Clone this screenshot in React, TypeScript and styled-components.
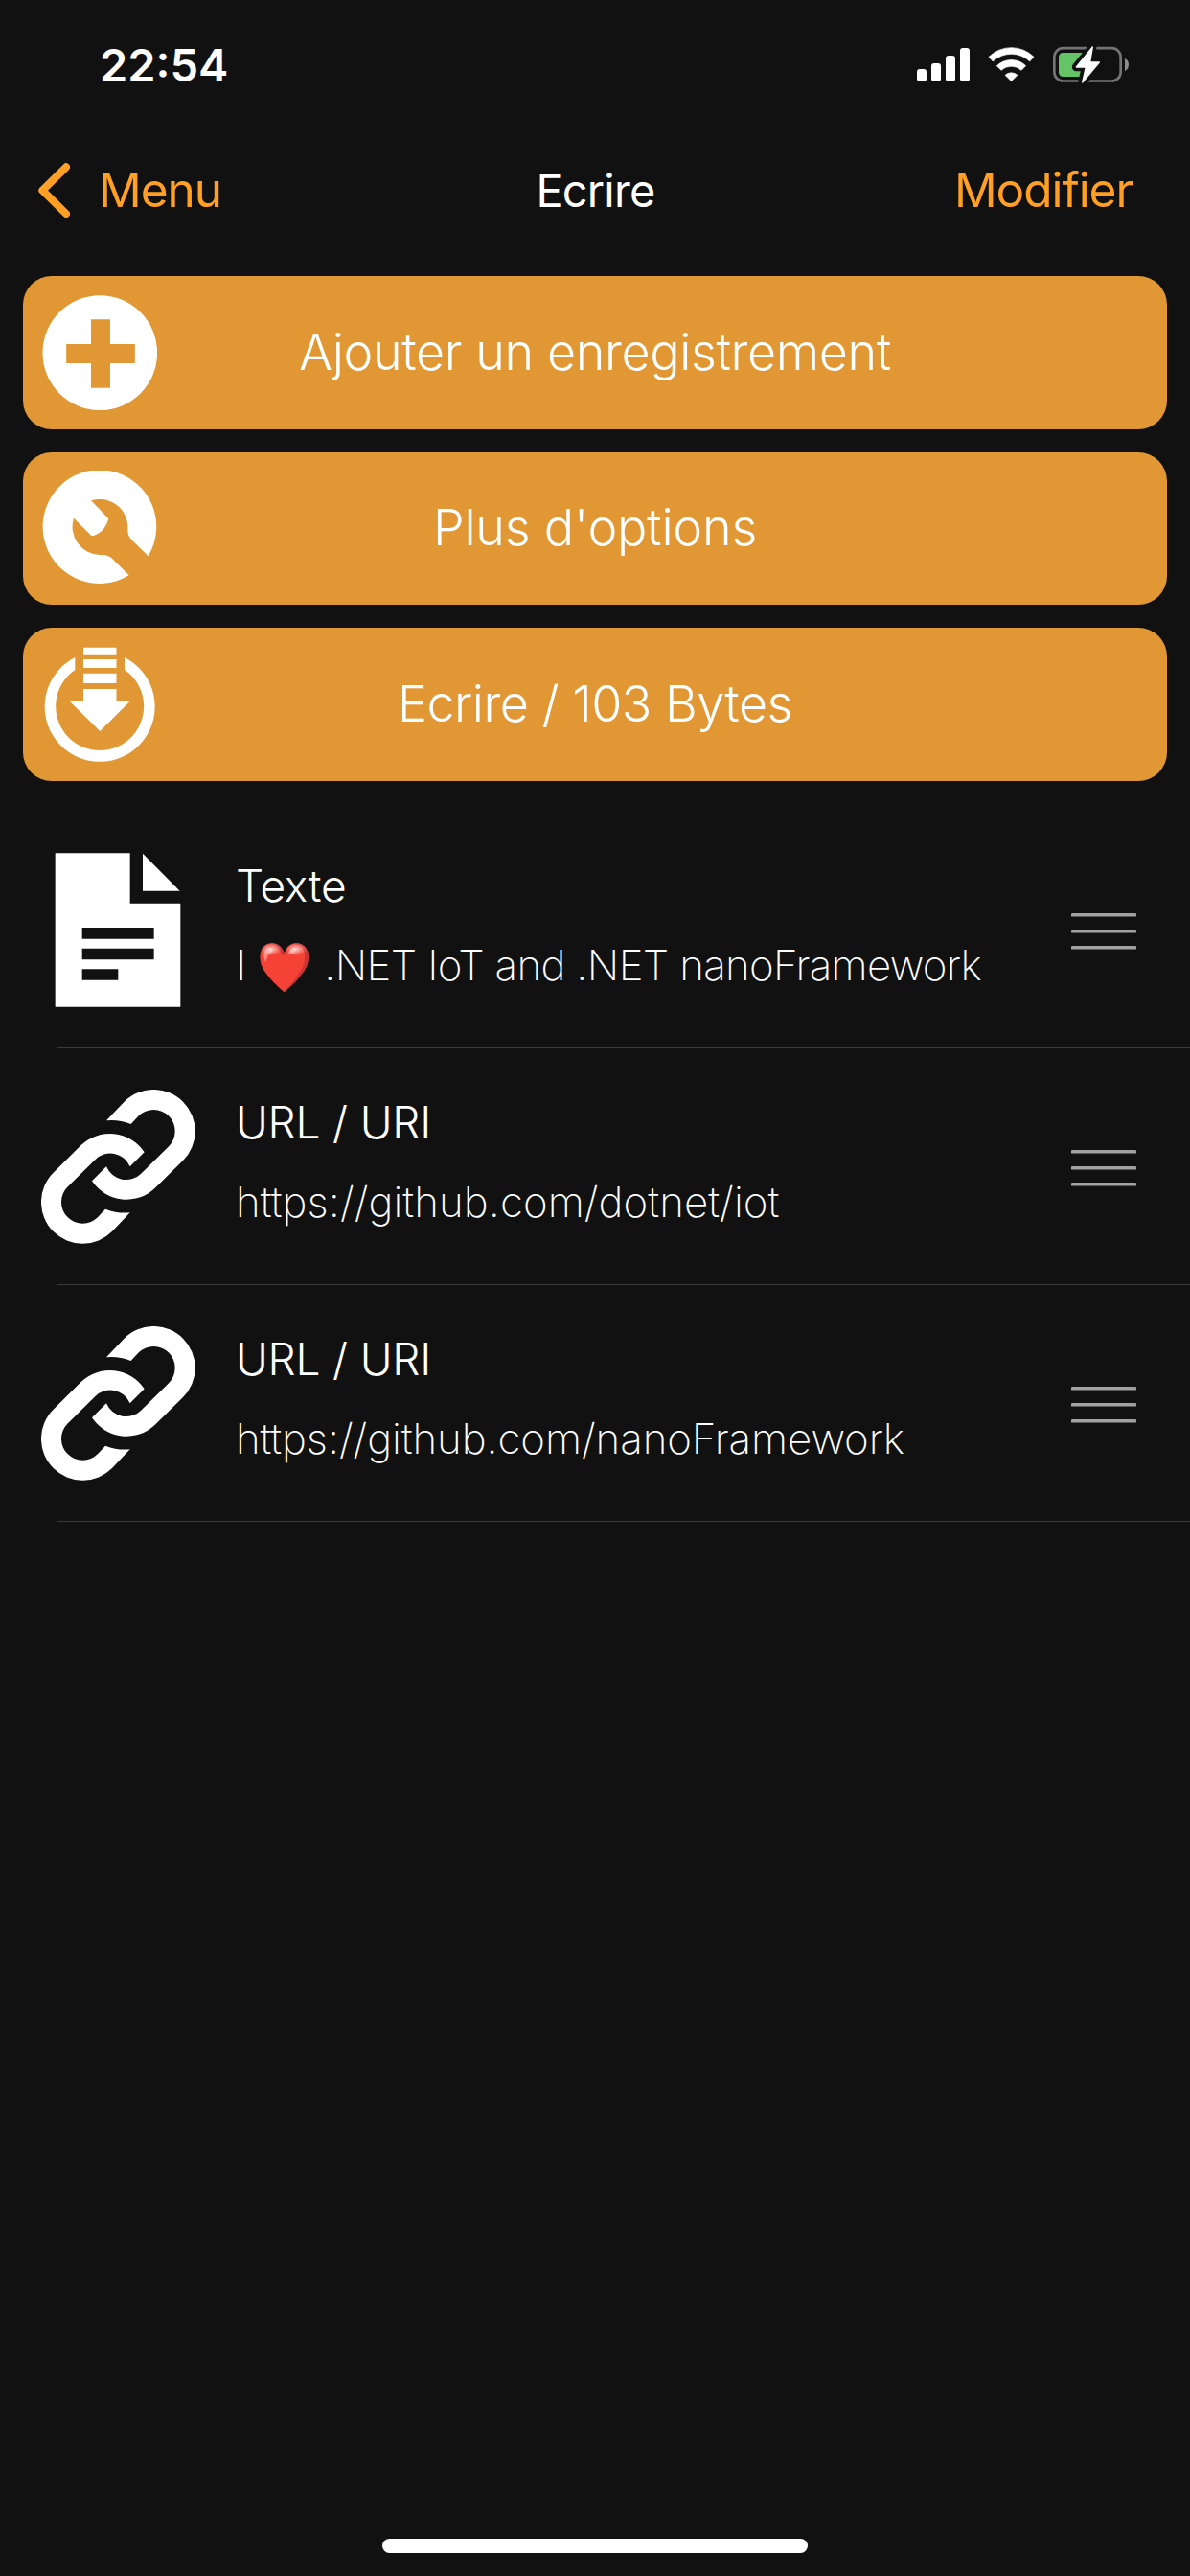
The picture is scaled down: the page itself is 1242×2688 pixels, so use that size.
import React from "react";
import styled, { createGlobalStyle } from "styled-components";

const GlobalStyle = createGlobalStyle`
  * { box-sizing: border-box; }
  body {
    margin: 0;
    background: #111111;
    color: #ffffff;
    font-family: "Inter", "Liberation Sans", sans-serif;
  }
`;

const Screen = styled.div`
  display: flex;
  flex-direction: column;
  width: 1242px;
  height: 2688px;
  overflow: hidden;
  background: #111111;
`;

const StatusBar = styled.div`
  display: flex;
  align-items: center;
  justify-content: space-between;
  height: 136px;
  padding: 0 63px 0 104px;
`;

const Clock = styled.span`
  font-size: 47px;
  font-weight: 600;
  line-height: 60px;
`;

const StatusIcons = styled.div`
  display: flex;
  align-items: center;
  gap: 19px;
  margin-top: -1px;
`;

const NavBar = styled.header`
  display: grid;
  grid-template-columns: 1fr auto 1fr;
  align-items: center;
  height: 124px;
  padding: 0 60px 0 40px;
`;

const NavButton = styled.button<{ $end?: boolean }>`
  display: flex;
  align-items: center;
  justify-self: ${(p) => (p.$end ? "end" : "start")};
  gap: 30px;
  padding: 0;
  border: 0;
  background: none;
  color: #ff9f24;
  font: 400 49.5px / 60px "Inter", "Liberation Sans", sans-serif;
  letter-spacing: -1.05px;
`;

const Title = styled.h1`
  margin: 2px 0 0;
  padding-left: 21px;
  font-size: 46.8px;
  font-weight: 400;
  line-height: 60px;
  letter-spacing: -0.74px;
`;

const Actions = styled.div`
  display: flex;
  flex-direction: column;
  gap: 24px;
  padding: 28px 24px 0;
`;

const ActionButton = styled.button<{ $spacing: number }>`
  display: grid;
  grid-template-columns: 120px 1fr 120px;
  align-items: center;
  height: 159.67px;
  padding: 0 20px;
  border: 0;
  border-radius: 30px;
  background: #e19834;
  color: #ffffff;
  font: 300 52px / 64px "Inter", "Liberation Sans", sans-serif;
  letter-spacing: ${(p) => p.$spacing}px;
  text-align: center;
`;

const Records = styled.ul`
  margin: 32px 0 0;
  padding: 0;
  list-style: none;
`;

const Record = styled.li`
  display: flex;
  height: 247px;
  padding-left: 43px;
  background: linear-gradient(#3a3a3c, #3a3a3c) 60px 100% / 100% 1px no-repeat;
`;

const RecordIcon = styled.svg`
  flex: none;
  width: 160.67px;
  height: 160.67px;
  margin-top: 43px;
`;

const RecordBody = styled.div`
  display: flex;
  flex: 1;
  flex-direction: column;
  gap: 24px;
  padding: 47px 0 0 42.3px;
  white-space: nowrap;
`;

const RecordTitle = styled.div`
  font-size: 46px;
  font-weight: 300;
  line-height: 60px;
  letter-spacing: -0.2px;
`;

const RecordValue = styled.div<{ $spacing: number }>`
  font-size: 43.8px;
  font-weight: 200;
  line-height: 60px;
  height: 60px;
  letter-spacing: ${(p) => p.$spacing}px;
`;

const Heart = styled.span`
  position: relative;
  display: inline-block;
  width: 58.5px;
  height: 60px;
  vertical-align: top;
  font-size: 46px;
  letter-spacing: 0;
  transform: scaleY(1.1);

  &::after {
    content: "";
    position: absolute;
    left: 3px;
    top: 8px;
    width: 50px;
    height: 15px;
    background:
      radial-gradient(ellipse 11px 6px at 12px 6px, rgba(255, 255, 255, 0.7), transparent),
      radial-gradient(ellipse 11px 6px at 38px 6px, rgba(255, 255, 255, 0.7), transparent);
  }
`;

const Handle = styled.div`
  display: flex;
  flex: none;
  flex-direction: column;
  align-self: center;
  gap: 13px;
  margin: 4px 56px 0 0;
`;

const HandleLine = styled.span`
  width: 68px;
  height: 4px;
  border-radius: 1px;
  background: #a3a0a1;
  border-bottom: 1px solid #5c5a5b;
`;

const HomeIndicator = styled.div`
  width: 444px;
  height: 15px;
  margin: auto auto 24px;
  border-radius: 8px;
  background: #ffffff;
`;

const SignalIcon = () => (
  <svg width="55" height="39" viewBox="111 84 165 117" fill="#fff">
    <rect x="111" y="156" width="30" height="39" rx="9" />
    <rect x="156" y="138" width="30" height="57" rx="9" />
    <rect x="201" y="114" width="30" height="81" rx="9" />
    <rect x="246" y="90" width="30" height="105" rx="9" />
  </svg>
);

const WifiIcon = () => (
  <svg width="49" height="39" viewBox="333 84 147 117" fill="#fff" stroke="#fff" strokeWidth="2" strokeLinejoin="round">
    <path d="M336 118A100 100 0 0 1 477 118L464 132A83 83 0 0 0 349 132Z" />
    <path d="M361 146A65 65 0 0 1 452 146L438 160A46 46 0 0 0 375 160Z" />
    <path d="M387 175A29 29 0 0 1 426 175L406.500 194Z" />
  </svg>
);

const BatteryIcon = () => (
  <svg width="80" height="39" viewBox="537 84 240 117">
    <rect x="541" y="90.500" width="208" height="103" rx="28" fill="none" stroke="#747474" strokeWidth="8" />
    <path d="M762 123C778 129 778 156 762 162Z" fill="#8c8c8c" />
    <path d="M570 105H650V180H570Q555 180 555 165V120Q555 105 570 105Z" fill="#65c466" />
    <path d="M640 60H700L652 215H770V100H640Z" fill="none" />
    <path d="M652 105H668V184H622Z" fill="#111" />
    <path
      d="M661 86L609 150H639L628 199L684 135H654Z"
      fill="#111"
      stroke="#111"
      strokeWidth="25"
      strokeLinejoin="round"
    />
    <path d="M661 87L610 150H640L629 198L682 135H653Z" fill="#fff" stroke="#fff" strokeWidth="4" strokeLinejoin="round" />
  </svg>
);

const ChevronLeft = () => (
  <svg width="33" height="57" viewBox="120 447 99 171">
    <path d="M207 460L133 533L207 606" fill="none" stroke="#ff9f24" strokeWidth="24" strokeLinecap="round" strokeLinejoin="round" />
  </svg>
);

const PlusIcon = () => (
  <svg width="120" height="120" viewBox="132 114 360 360" fill="#fff">
    <path
      fillRule="evenodd"
      d="M133.500 294.500A179.500 179.500 0 1 1 492.500 294.500A179.500 179.500 0 1 1 133.500 294.500ZM285 189.500V267H207.500V327H285V404.500H345V327H422.500V267H345V189.500Z"
    />
  </svg>
);

const WrenchIcon = () => (
  <svg width="120" height="120" viewBox="42 36 360 360" fill="#fff">
    <path d="M374 304A178 178 0 1 0 314 364L264 314Q250 300 232 300L222 300A88 88 0 0 1 141 185L197 241Q236 234 250 187L195 130A88 88 0 0 1 310 213V223Q310 241 322 253Z" />
  </svg>
);

const DownloadIcon = () => (
  <svg width="120" height="120" viewBox="132 375 360 360" fill="#fff">
    <path d="M235 408A172.500 172.500 0 1 0 390 408V447A138 138 0 1 1 235 447Z" />
    <path d="M261 377H364.500V398H261ZM261 414H364.500V441H261ZM261 458H364.500V489H261Z" />
    <path d="M261 507H364.500V545H407L313 639L218 545H261Z" />
  </svg>
);

const FileIcon = () => (
  <RecordIcon viewBox="129 120 482 482" fill="#fff">
    <path fillRule="evenodd" d="M173 121H407V278H565V602H173ZM257 354V389H482V354ZM257 419V454H482V419ZM257 484V518H370V484Z" />
    <path d="M447 122L563 239H447Z" />
  </RecordIcon>
);

const LINK_HALF =
  "M333 208L389 149A130 130 0 0 1 573 333L487 418A130 130 0 0 1 288 397L333 352A67 67 0 0 0 442.400 373.400L528.400 288.400A67 67 0 0 0 433.600 193.600L410 219A171 171 0 0 0 333 208Z";

const LinkIcon = () => (
  <RecordIcon viewBox="129 111 482 482" fill="#fff">
    <path d={LINK_HALF} />
    <path d={LINK_HALF} transform="rotate(180 370 352)" />
  </RecordIcon>
);

const actions = [
  { icon: <PlusIcon />, label: "Ajouter un enregistrement", spacing: -0.37 },
  { icon: <WrenchIcon />, label: "Plus d'options", spacing: -0.2 },
  { icon: <DownloadIcon />, label: "Ecrire / 103 Bytes", spacing: -0.5 },
];

const records = [
  {
    icon: <FileIcon />,
    title: "Texte",
    value: (
      <>
        I <Heart>❤️</Heart> .NET IoT and .NET nanoFramework
      </>
    ),
    spacing: -0.67,
  },
  { icon: <LinkIcon />, title: "URL / URI", value: "https://github.com/dotnet/iot", spacing: 0.08 },
  { icon: <LinkIcon />, title: "URL / URI", value: "https://github.com/nanoFramework", spacing: -0.08 },
];

export default function App() {
  return (
    <Screen>
      <GlobalStyle />
      <StatusBar>
        <Clock>22:54</Clock>
        <StatusIcons>
          <SignalIcon />
          <WifiIcon />
          <BatteryIcon />
        </StatusIcons>
      </StatusBar>
      <NavBar>
        <NavButton>
          <ChevronLeft />
          Menu
        </NavButton>
        <Title>Ecrire</Title>
        <NavButton $end>Modifier</NavButton>
      </NavBar>
      <Actions>
        {actions.map((a) => (
          <ActionButton key={a.label} $spacing={a.spacing}>
            {a.icon}
            <span>{a.label}</span>
          </ActionButton>
        ))}
      </Actions>
      <Records>
        {records.map((r, i) => (
          <Record key={i}>
            {r.icon}
            <RecordBody>
              <RecordTitle>{r.title}</RecordTitle>
              <RecordValue $spacing={r.spacing}>{r.value}</RecordValue>
            </RecordBody>
            <Handle>
              <HandleLine />
              <HandleLine />
              <HandleLine />
            </Handle>
          </Record>
        ))}
      </Records>
      <HomeIndicator />
    </Screen>
  );
}
